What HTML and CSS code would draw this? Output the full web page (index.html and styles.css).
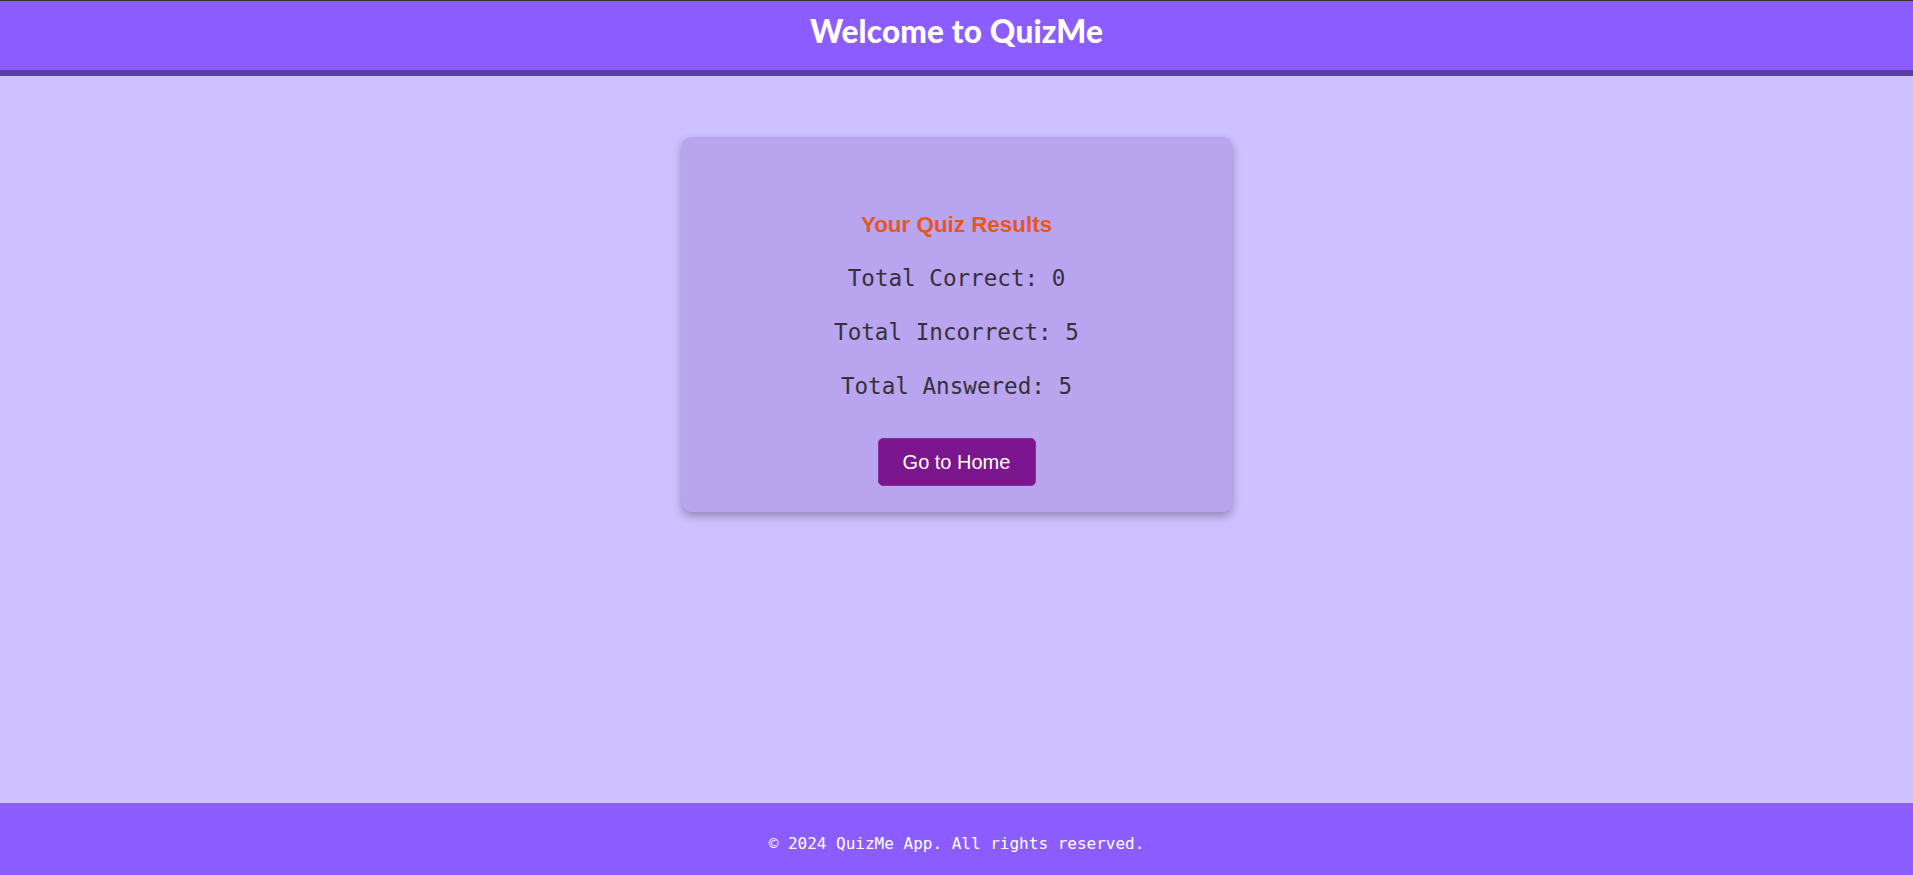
FILE: index.html
```html
<!DOCTYPE html>
<html lang="en">
<head>
<meta charset="utf-8">
<title>QuizMe</title>
<link rel="stylesheet" href="styles.css">
</head>
<body>
<div class="page">
  <header class="site-header">
    <h1 class="site-title">Welcome to QuizMe</h1>
  </header>
  <main class="main">
    <section class="result-card">
      <h2 class="result-title">Your Quiz Results</h2>
      <p class="stat">Total Correct: 0</p>
      <p class="stat">Total Incorrect: 5</p>
      <p class="stat stat-last">Total Answered: 5</p>
      <button class="home-btn" type="button">Go to Home</button>
    </section>
  </main>
  <footer class="site-footer">
    <p class="copyright">© 2024 QuizMe App. All rights reserved.</p>
  </footer>
</div>
</body>
</html>
```

FILE: styles.css
```css
html, body {
  margin: 0;
  padding: 0;
  height: 100%;
}
body {
  background: #cdc1ff;
  font-family: "Liberation Sans", Arial, sans-serif;
}
.page {
  min-height: 100%;
  display: flex;
  flex-direction: column;
}
.site-header {
  box-sizing: border-box;
  background: #8b5dff;
  border-top: 1px solid #333333;
  border-bottom: 6px solid #5a3ea0;
  height: 76px;
  padding-top: 10.5px;
  display: flex;
  justify-content: center;
  align-items: flex-start;
}
.site-title {
  margin: 0;
  color: #ffffff;
  font-family: "Lato", sans-serif;
  font-weight: 900;
  font-size: 31.5px;
  line-height: 38px;
  letter-spacing: 0.2px;
}
.main {
  flex: 1;
  display: flex;
  justify-content: center;
  align-items: flex-start;
  padding-top: 61px;
}
.result-card {
  width: 550px;
  height: 375px;
  box-sizing: border-box;
  background: #b9a4f0;
  border-radius: 9px;
  box-shadow: 0 4px 10px rgba(0, 0, 0, 0.3);
  display: flex;
  flex-direction: column;
  align-items: center;
  padding-top: 75.2px;
}
.result-title {
  margin: 0 0 26.2px;
  color: #e8561c;
  font-size: 22.4px;
  font-weight: bold;
  line-height: 26px;
}
.stat {
  margin: 0 0 26px;
  font-family: "DejaVu Sans Mono", monospace;
  font-size: 22.6px;
  line-height: 28px;
  color: #35303a;
}
.stat-last {
  margin-bottom: 37.8px;
}
.home-btn {
  box-sizing: border-box;
  background: #7b168e;
  color: #ffffff;
  border: 1px solid #8a2aa0;
  border-radius: 5px;
  font-family: "Liberation Sans", Arial, sans-serif;
  font-size: 20px;
  width: 158px;
  height: 48px;
  padding: 0;
  cursor: pointer;
}
.site-footer {
  box-sizing: border-box;
  background: #8b5dff;
  height: 72px;
  padding-top: 31px;
  display: flex;
  justify-content: center;
  align-items: flex-start;
}
.copyright {
  margin: 0;
  color: #ffffff;
  font-family: "DejaVu Sans Mono", monospace;
  font-size: 16px;
  line-height: 19px;
}
```
